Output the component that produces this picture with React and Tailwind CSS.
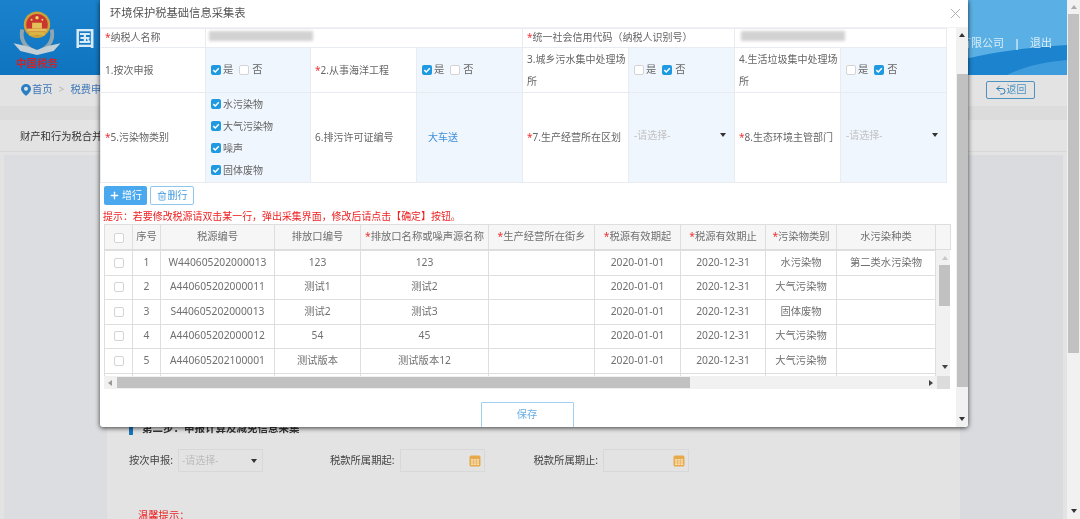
import React from "react";
import { Plus, Trash2, Undo2 } from "lucide-react";

const FONT = "font-['Noto_Sans','Noto_Sans_CJK_SC',sans-serif]";

function Tri({ dir = "down", className = "" }) {
  const pts = { down: "0,1 6,1 3,5", up: "0,5 6,5 3,1", left: "5,0 5,6 1,3", right: "1,0 1,6 5,3" }[dir];
  return (
    <svg viewBox="0 0 6 6" className={`w-[6px] h-[6px] ${className}`}>
      <polygon points={pts} fill="currentColor" />
    </svg>
  );
}

function Box({ on = false, className = "" }) {
  return on ? (
    <span className={`inline-flex shrink-0 w-[10px] h-[10px] rounded-[2px] bg-[#1f9ae0] items-center justify-center ${className}`}>
      <svg viewBox="0 0 10 10" className="w-[10px] h-[10px]">
        <path d="M2.3 5.1 4.3 7 7.8 3.2" fill="none" stroke="#fff" strokeWidth="1.5" />
      </svg>
    </span>
  ) : (
    <span className={`inline-block shrink-0 w-[10px] h-[10px] rounded-[2px] bg-white border border-[#d4d4d4] ${className}`} />
  );
}

function YesNo({ yes }) {
  return (
    <div className="flex items-center pl-[5px] text-[10.3px] text-[#666]">
      <Box on={yes} />
      <span className="ml-[2px]">是</span>
      <Box on={!yes} className="ml-[6px]" />
      <span className="ml-[3px]">否</span>
    </div>
  );
}

function Star() {
  return <span className="text-[#e33]">*</span>;
}

function SelectCell() {
  return (
    <div className="flex items-center justify-between pl-[5px] pr-[8px] -mt-[5px] text-[10px] text-[#c2c2c2]">
      <span>-请选择-</span>
      <Tri className="text-[#333]" />
    </div>
  );
}

const labelCell = "border border-[#e8ebf0] bg-white pl-[4px] pr-[2px] text-[10px] text-[#666] align-middle";
const valueCell = "border border-[#e8ebf0] bg-[#f0f6fe] align-middle";

function FormTable() {
  return (
    <table className="table-fixed border-collapse w-[846px]">
      <colgroup>
        <col className="w-[105px]" />
        <col className="w-[105px]" />
        <col className="w-[106px]" />
        <col className="w-[106px]" />
        <col className="w-[106px]" />
        <col className="w-[106px]" />
        <col className="w-[106px]" />
        <col className="w-[106px]" />
      </colgroup>
      <tbody>
        <tr className="h-[19px]">
          <td className="border border-[#e8ebf0] bg-white pl-[4px] pb-[2px] text-[10px] text-[#666] align-middle"><Star />纳税人名称</td>
          <td colSpan={3} className="border border-[#e8ebf0] bg-white align-top">
            <div className="ml-[3px] mt-[2px] w-[104px] h-[10px] bg-[#d2d2d2] blur-[1.5px]" />
          </td>
          <td colSpan={2} className="border border-[#e8ebf0] bg-white pl-[4px] pb-[2px] text-[10px] text-[#666] align-middle whitespace-nowrap"><Star />统一社会信用代码（纳税人识别号）</td>
          <td colSpan={2} className="border border-[#e8ebf0] bg-white align-top">
            <div className="ml-[6px] mt-[2px] w-[104px] h-[10px] bg-[#d2d2d2] blur-[1.5px]" />
          </td>
        </tr>
        <tr className="h-[45px]">
          <td className={labelCell}>1.按次申报</td>
          <td className={valueCell}><YesNo yes /></td>
          <td className={labelCell}><Star />2.从事海洋工程</td>
          <td className={valueCell}><YesNo yes /></td>
          <td className={`${labelCell} leading-[22px]`}>3.城乡污水集中处理场所</td>
          <td className={valueCell}><YesNo yes={false} /></td>
          <td className={`${labelCell} leading-[22px]`}>4.生活垃圾集中处理场所</td>
          <td className={valueCell}><YesNo yes={false} /></td>
        </tr>
        <tr className="h-[90px]">
          <td className={labelCell}><Star />5.污染物类别</td>
          <td className={valueCell}>
            <div className="flex flex-col gap-[12px] pl-[5px] pb-[2px] text-[10px] leading-[10px] text-[#666]">
              {["水污染物", "大气污染物", "噪声", "固体废物"].map((t) => (
                <div key={t} className="flex items-center gap-[2px]"><Box on />{t}</div>
              ))}
            </div>
          </td>
          <td className={labelCell}>6.排污许可证编号</td>
          <td className={`${valueCell} pl-[11px] text-[10px] text-[#3f8fdc]`}>大车送</td>
          <td className={labelCell}><Star />7.生产经营所在区划</td>
          <td className={valueCell}><SelectCell /></td>
          <td className={labelCell}><Star />8.生态环境主管部门</td>
          <td className={valueCell}><SelectCell /></td>
        </tr>
      </tbody>
    </table>
  );
}

const widths = [28, 28, 114, 86, 128, 106, 86, 85, 71, 99];
const Cols = ({ extra }) => (
  <colgroup>
    {widths.map((w, i) => <col key={i} style={{ width: w }} />)}
    {extra ? <col style={{ width: 15 }} /> : null}
  </colgroup>
);

const heads = [
  [false, "序号"], [false, "税源编号"], [false, "排放口编号"], [true, "排放口名称或噪声源名称"],
  [true, "生产经营所在街乡"], [true, "税源有效期起"], [true, "税源有效期止"], [true, "污染物类别"], [false, "水污染种类"],
];
const rows = [
  ["1", "W440605202000013", "123", "123", "水污染物", "第二类水污染物"],
  ["2", "A440605202000011", "测试1", "测试2", "大气污染物", ""],
  ["3", "S440605202000013", "测试2", "测试3", "固体废物", ""],
  ["4", "A440605202000012", "54", "45", "大气污染物", ""],
  ["5", "A440605202100001", "测试版本", "测试版本12", "大气污染物", ""],
];

function DataTable() {
  const td = "border border-[#dedede] text-center whitespace-nowrap overflow-hidden p-0";
  const bodyTd = "border border-[#dedede] text-center whitespace-nowrap overflow-hidden px-0 pt-0 pb-[1px]";
  return (
    <div className="w-[846px] text-[10.3px] text-[#707070]">
      <table className="table-fixed border-collapse w-[846px] bg-[#f6f6f6]">
        <Cols extra />
        <thead>
          <tr className="h-[25px]">
            <th className={`${td} font-normal`}><Box className="align-middle" /></th>
            {heads.map(([s, t]) => (
              <th key={t} className={`${td} font-normal`}>{s ? <Star /> : null}{t}</th>
            ))}
            <th className={`${td} font-normal`} />
          </tr>
        </thead>
      </table>
      <div className="flex h-[126px] overflow-hidden">
        <table className="table-fixed border-collapse w-[831px] h-max shrink-0">
          <Cols />
          <tbody>
            {rows.concat([["", "", "", "", "", ""]]).map((r, i) => (
              <tr key={i} className="h-[24.5px]">
                <td className={bodyTd}>{r[0] ? <Box className="align-middle" /> : null}</td>
                <td className={bodyTd}>{r[0]}</td>
                <td className={bodyTd}>{r[1]}</td>
                <td className={bodyTd}>{r[2]}</td>
                <td className={bodyTd}>{r[3]}</td>
                <td className={bodyTd} />
                <td className={bodyTd}>{r[0] ? "2020-01-01" : ""}</td>
                <td className={bodyTd}>{r[0] ? "2020-12-31" : ""}</td>
                <td className={bodyTd}>{r[4]}</td>
                <td className={bodyTd}>{r[5]}</td>
              </tr>
            ))}
          </tbody>
        </table>
        <div className="w-[15px] shrink-0 bg-[#f1f1f1] flex flex-col items-center pl-[2px] pt-[5px] pb-[6px]">
          <Tri dir="up" className="text-[#c8c8c8]" />
          <div className="w-[12px] h-[41px] mt-[4px] bg-[#c1c1c1]" />
          <div className="flex-1" />
          <Tri className="text-[#444]" />
        </div>
      </div>
      <div className="flex h-[13px] bg-[#f1f1f1] items-center">
        <Tri dir="left" className="ml-[3px] text-[#999]" />
        <div className="ml-[4px] w-[573px] h-[11px] bg-[#c1c1c1]" />
        <div className="flex-1" />
        <Tri dir="right" className="mr-[3px] text-[#444]" />
        <div className="w-[13px] h-full bg-[#dcdcdc] shrink-0" />
      </div>
    </div>
  );
}

function Modal() {
  return (
    <div className="absolute left-[100px] top-0 w-[868px] h-[427px] bg-white rounded-b-[3px] shadow-[0_1px_5px_rgba(0,0,0,0.75)] overflow-hidden flex flex-col">
      <div className="h-[28px] shrink-0 flex items-center justify-between pl-[10px] pr-[7px] border-b border-[#f2f2f2]">
        <span className="text-[11.3px] text-[#555]">环境保护税基础信息采集表</span>
        <svg viewBox="0 0 12 12" className="w-[11px] h-[11px]">
          <path d="M1 1 11 11M11 1 1 11" stroke="#aaa" strokeWidth="1" />
        </svg>
      </div>
      <div className="flex-1 flex min-h-0">
        <div className="w-[856px] shrink-0 overflow-hidden">
          <FormTable />
          <div className="flex gap-[3px] pl-[4px] mt-[3px]">
            <button className="w-[43px] h-[19px] rounded-[2px] bg-[#4aa8ee] text-white text-[10px] flex items-center justify-center gap-[2px]">
              <Plus size={11} strokeWidth={3} />增行
            </button>
            <button className="w-[44px] h-[19px] rounded-[2px] bg-white border border-[#8fc6ee] text-[#4a9fe0] text-[10px] flex items-center justify-center gap-[1px]">
              <Trash2 size={10} strokeWidth={2} />删行
            </button>
          </div>
          <div className="pl-[3px] mt-[4px] h-[15px] leading-[15px] text-[9.95px] text-[#e22] whitespace-nowrap">
            提示：若要修改税源请双击某一行，弹出采集界面，修改后请点击【确定】按钮。
          </div>
          <div className="pl-[4px]">
            <DataTable />
          </div>
          <div className="flex justify-center pr-[2px] mt-[13px]">
            <button className="w-[93px] h-[30px] border border-[#9fd0f0] rounded-[1px] text-[10.3px] text-[#68aee6] pb-[5px]">保存</button>
          </div>
        </div>
        <div className="w-[12px] shrink-0 bg-[#f1f1f1] flex flex-col items-center pt-[4px] pb-[5px]">
          <Tri dir="up" className="text-[#333]" />
          <div className="w-[11px] mt-[36px] h-[313px] bg-[#c1c1c1]" />
          <div className="flex-1" />
          <Tri className="text-[#333]" />
        </div>
      </div>
    </div>
  );
}

function Logo() {
  return (
    <div className="flex flex-col items-center w-[48px] ml-[13px] mt-[10px]">
      <svg viewBox="0 0 48 46" className="w-[48px] h-[45px]">
        <path d="M9 20C6 32 14 40 24 43C34 40 42 32 39 20" fill="none" stroke="#8fa5b0" strokeWidth="4" />
        <path d="M0 34 14 37 24 41 34 37 48 34 41 42 24 46 7 42Z" fill="#c4d0d6" />
        <circle cx="24" cy="15" r="13.5" fill="#c9a23a" />
        <circle cx="24" cy="15" r="11" fill="#c8362f" />
        <path d="M14 19h20v3H14z" fill="#e4c158" />
        <path d="M16 22h16v4H16z" fill="#d9b445" />
        <path d="M19 13h10v6H19z" fill="#e4c158" />
        <circle cx="24" cy="8" r="1.8" fill="#f0d468" />
        <circle cx="18.5" cy="10" r="1" fill="#f0d468" />
        <circle cx="29.5" cy="10" r="1" fill="#f0d468" />
      </svg>
      <span className="font-['Noto_Sans_CJK_SC',serif] text-[10.5px] leading-[13px] font-bold text-[#c8252a] mt-[1px]">中国税务</span>
    </div>
  );
}

function Field({ label, children, cls = "" }) {
  return (
    <div className={`flex items-center ${cls}`}>
      <span className="text-[10.3px] text-[#444] whitespace-nowrap">{label}</span>
      {children}
    </div>
  );
}

function Cal() {
  return (
    <svg viewBox="0 0 12 12" className="w-[12px] h-[12px]">
      <rect x="0.5" y="0.5" width="11" height="11" rx="1.5" fill="#e8a94a" />
      <path d="M2 4h8v6H2z" fill="#f5deb3" />
      <path d="M2 6h8M2 8h8M4.6 4v6M7.4 4v6" stroke="#e8a94a" strokeWidth="0.6" />
    </svg>
  );
}

function Page() {
  return (
    <div className="flex h-[519px] w-[1080px] overflow-hidden bg-[#e3e3e3]">
      <div className="w-[1067px] shrink-0 flex flex-col">
        <header className="relative h-[75px] shrink-0 bg-gradient-to-b from-[#1a82cd] to-[#0f74bf] overflow-hidden flex">
          <svg viewBox="0 0 400 75" preserveAspectRatio="none" className="absolute right-0 top-0 h-[75px] w-[400px]">
            <path d="M0 0H400V75H330C300 55 270 40 240 35C170 25 110 10 0 0Z" fill="#5ab0e4" />
            <path d="M250 75C280 62 320 50 400 45V75Z" fill="#1c83cf" />
            <path d="M340 75C360 65 380 62 400 60V75Z" fill="#3f9cdc" />
          </svg>
          <Logo />
          <span className="ml-[14px] mt-[27px] text-[20px] leading-[24px] font-bold text-[#d7ebf8]">国</span>
          <div className="absolute right-[15px] top-[35px] flex items-center text-[11px] text-[#d9edfa]">
            <span>有限公司</span>
            <span className="mx-[10px] font-bold">|</span>
            <span>退出</span>
          </div>
        </header>
        <div className="h-[31px] shrink-0 flex items-center justify-between pl-[21px] pr-[32px] pb-[2px]">
          <div className="flex items-center text-[10.3px] text-[#3f78b8]">
            <svg viewBox="0 0 10 12" className="w-[10px] h-[12px] mr-[1px]">
              <path d="M5 0a5 5 0 0 1 5 5c0 3-5 7-5 7S0 8 0 5a5 5 0 0 1 5-5Z" fill="#2a7fc4" />
              <circle cx="5" cy="4.8" r="2" fill="#e3e3e3" />
            </svg>
            <span>首页</span>
            <span className="mx-[6px] text-[#b5b5b5]">&gt;</span>
            <span>税费申报</span>
          </div>
          <button className="w-[49px] h-[18px] rounded-[2px] border border-[#4d93c2] flex items-center justify-center text-[10px] text-[#4d93c2]">
            <Undo2 size={12} strokeWidth={2} className="text-[#2d7cb4]" />返回
          </button>
        </div>
        <div className="h-[14px] shrink-0 bg-[#dcdcdc]" />
        <div className="h-[32px] shrink-0 flex items-center pl-[20px] pt-[2px] text-[10.3px] text-[#333] border-b border-[#d8d8d8]">
          财产和行为税合并纳税申报
        </div>
        <div className="flex-1 flex mt-[3px] pl-[4px] pr-[4px]">
          <div className="w-[103px] shrink-0 bg-[#dcdde0]" />
          <div className="w-[853px] shrink-0 relative">
            <div className="pt-[267px] pl-[22px]">
              <div className="flex items-center h-[13px]">
                <div className="w-[4px] h-[13px] bg-[#1b75bc]" />
                <span className="ml-[9px] text-[10.5px] font-bold text-[#333]">第二步：申报计算及减免信息采集</span>
              </div>
              <div className="flex items-center mt-[14px] h-[23px]">
                <Field label="按次申报:">
                  <div className="ml-[5px] w-[85px] h-[23px] border border-[#d8d8d8] flex items-center justify-between pl-[3px] pr-[5px] text-[10px] text-[#bbb]">
                    <span>-请选择-</span><Tri className="text-[#333]" />
                  </div>
                </Field>
                <Field label="税款所属期起:" cls="ml-[67px]">
                  <div className="ml-[5px] w-[85px] h-[23px] border border-[#d8d8d8] flex items-center justify-end pr-[3px]"><Cal /></div>
                </Field>
                <Field label="税款所属期止:" cls="ml-[49px]">
                  <div className="ml-[5px] w-[86px] h-[23px] border border-[#d8d8d8] flex items-center justify-end pr-[3px]"><Cal /></div>
                </Field>
              </div>
              <div className="mt-[35px] ml-[9px] text-[10.3px] leading-[16px] text-[#e22]">温馨提示：</div>
            </div>
          </div>
          <div className="flex-1 bg-[#d9dbdf]" />
        </div>
      </div>
      <div className="w-[13px] shrink-0 bg-[#f1f1f1] flex flex-col items-center pt-[4px] pb-[5px]">
        <Tri dir="up" className="text-[#aaa]" />
        <div className="w-[11px] mt-[4px] h-[339px] bg-[#c1c1c1]" />
        <div className="flex-1" />
        <Tri className="text-[#333]" />
      </div>
    </div>
  );
}

export default function App() {
  return (
    <div className={`relative w-[1080px] h-[519px] overflow-hidden blur-[0.35px] ${FONT}`}>
      <Page />
      <Modal />
    </div>
  );
}
